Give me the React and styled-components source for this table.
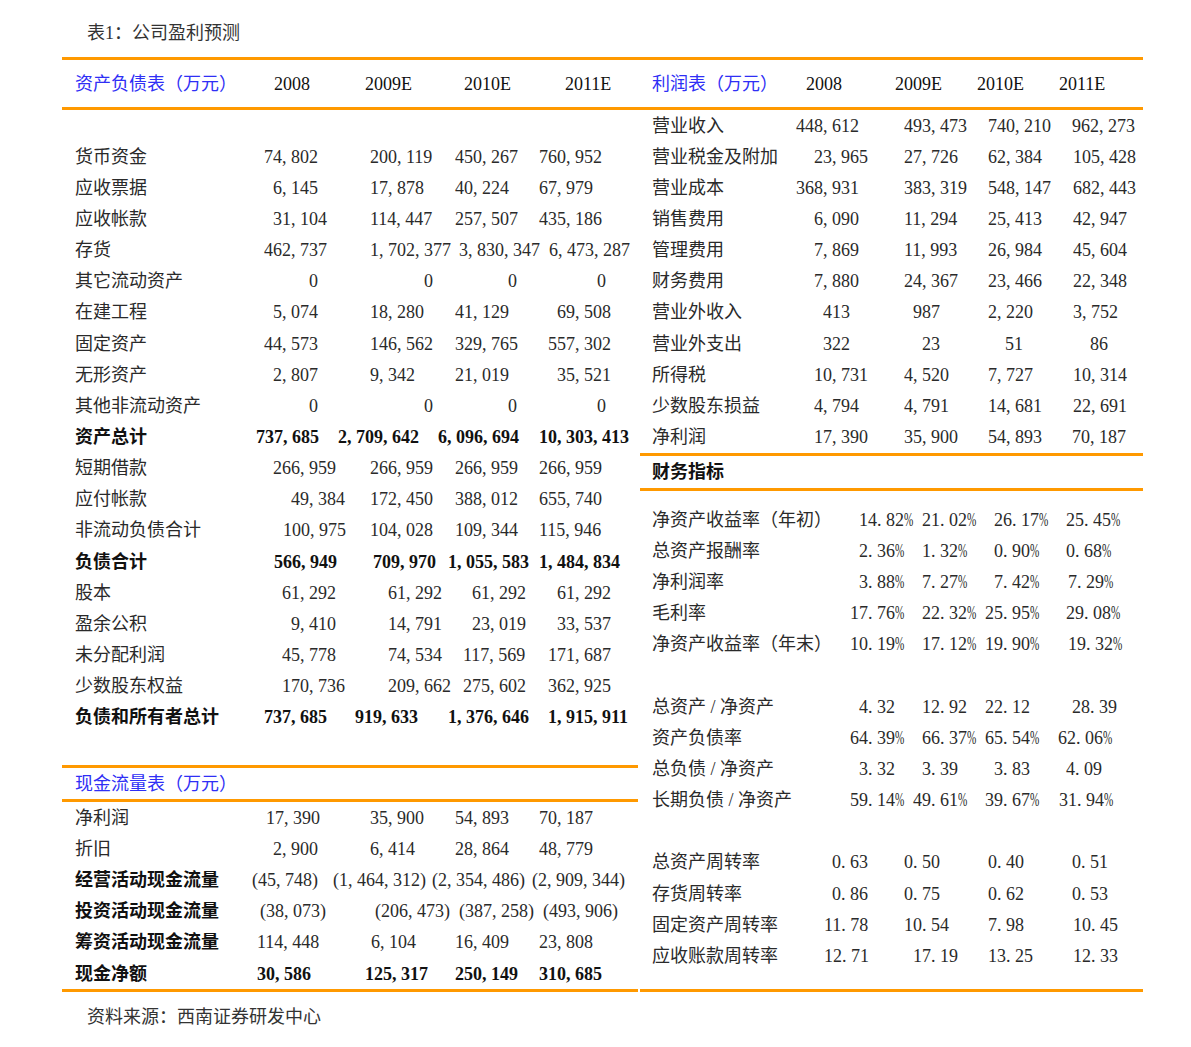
import React from 'react'
import styled, { createGlobalStyle } from 'styled-components'

const ORANGE = '#ff9900'
const BLUE = '#2f2ff5'

const GlobalStyle = createGlobalStyle`
  html, body {
    margin: 0;
    padding: 0;
    background: #ffffff;
  }
  body {
    font-family: "Liberation Serif", "Noto Sans CJK SC", serif;
    color: #2a2a2a;
  }
`

// column starts, measured from each panel's left edge
const LEFT_COLS = '178px 85px 95px 85px 133px'
const LEFT_STARTS = [62, 240, 325, 420, 505]
const RIGHT_COLS = '145px 105px 85px 75px 93px'
const RIGHT_STARTS = [640, 785, 890, 975, 1050]

const balance = [
  { label: '' },
  { label: '货币资金', vals: [[264, '74,802'], [370, '200,119'], [455, '450,267'], [539, '760,952']] },
  { label: '应收票据', vals: [[273, '6,145'], [370, '17,878'], [455, '40,224'], [539, '67,979']] },
  { label: '应收帐款', vals: [[273, '31,104'], [370, '114,447'], [455, '257,507'], [539, '435,186']] },
  { label: '存货', vals: [[264, '462,737'], [370, '1,702,377'], [459, '3,830,347'], [549, '6,473,287']] },
  { label: '其它流动资产', vals: [[309, '0'], [424, '0'], [508, '0'], [597, '0']] },
  { label: '在建工程', vals: [[273, '5,074'], [370, '18,280'], [455, '41,129'], [557, '69,508']] },
  { label: '固定资产', vals: [[264, '44,573'], [370, '146,562'], [455, '329,765'], [548, '557,302']] },
  { label: '无形资产', vals: [[273, '2,807'], [370, '9,342'], [455, '21,019'], [557, '35,521']] },
  { label: '其他非流动资产', vals: [[309, '0'], [424, '0'], [508, '0'], [597, '0']] },
  { label: '资产总计', bold: 'all', vals: [[256, '737,685'], [338, '2,709,642'], [438, '6,096,694'], [539, '10,303,413']] },
  { label: '短期借款', vals: [[273, '266,959'], [370, '266,959'], [455, '266,959'], [539, '266,959']] },
  { label: '应付帐款', vals: [[291, '49,384'], [370, '172,450'], [455, '388,012'], [539, '655,740']] },
  { label: '非流动负债合计', vals: [[283, '100,975'], [370, '104,028'], [455, '109,344'], [539, '115,946']] },
  { label: '负债合计', bold: 'all', vals: [[274, '566,949'], [373, '709,970'], [448, '1,055,583'], [539, '1,484,834']] },
  { label: '股本', vals: [[282, '61,292'], [388, '61,292'], [472, '61,292'], [557, '61,292']] },
  { label: '盈余公积', vals: [[291, '9,410'], [388, '14,791'], [472, '23,019'], [557, '33,537']] },
  { label: '未分配利润', vals: [[282, '45,778'], [388, '74,534'], [463, '117,569'], [548, '171,687']] },
  { label: '少数股东权益', vals: [[282, '170,736'], [388, '209,662'], [463, '275,602'], [548, '362,925']] },
  { label: '负债和所有者总计', bold: 'all', vals: [[264, '737,685'], [355, '919,633'], [448, '1,376,646'], [548, '1,915,911']] }
]

const cashflow = [
  { label: '净利润', vals: [[266, '17,390'], [370, '35,900'], [455, '54,893'], [539, '70,187']] },
  { label: '折旧', vals: [[273, '2,900'], [370, '6,414'], [455, '28,864'], [539, '48,779']] },
  { label: '经营活动现金流量', bold: 'label', vals: [[249, '(45,748)'], [330, '(1,464,312)'], [429, '(2,354,486)'], [529, '(2,909,344)']] },
  { label: '投资活动现金流量', bold: 'label', vals: [[257, '(38,073)'], [372, '(206,473)'], [456, '(387,258)'], [540, '(493,906)']] },
  { label: '筹资活动现金流量', bold: 'label', vals: [[257, '114,448'], [371, '6,104'], [455, '16,409'], [539, '23,808']] },
  { label: '现金净额', bold: 'all', vals: [[257, '30,586'], [365, '125,317'], [455, '250,149'], [539, '310,685']] }
]

const income = [
  { label: '营业收入', vals: [[796, '448,612'], [904, '493,473'], [988, '740,210'], [1072, '962,273']] },
  { label: '营业税金及附加', vals: [[814, '23,965'], [904, '27,726'], [988, '62,384'], [1073, '105,428']] },
  { label: '营业成本', vals: [[796, '368,931'], [904, '383,319'], [988, '548,147'], [1073, '682,443']] },
  { label: '销售费用', vals: [[814, '6,090'], [904, '11,294'], [988, '25,413'], [1073, '42,947']] },
  { label: '管理费用', vals: [[814, '7,869'], [904, '11,993'], [988, '26,984'], [1073, '45,604']] },
  { label: '财务费用', vals: [[814, '7,880'], [904, '24,367'], [988, '23,466'], [1073, '22,348']] },
  { label: '营业外收入', vals: [[823, '413'], [913, '987'], [988, '2,220'], [1073, '3,752']] },
  { label: '营业外支出', vals: [[823, '322'], [922, '23'], [1005, '51'], [1090, '86']] },
  { label: '所得税', vals: [[814, '10,731'], [904, '4,520'], [988, '7,727'], [1073, '10,314']] },
  { label: '少数股东损益', vals: [[814, '4,794'], [904, '4,791'], [988, '14,681'], [1073, '22,691']] },
  { label: '净利润', vals: [[814, '17,390'], [904, '35,900'], [988, '54,893'], [1072, '70,187']] }
]

const ratios = [
  { label: '净资产收益率（年初）', vals: [[859, '14.82%'], [922, '21.02%'], [994, '26.17%'], [1066, '25.45%']] },
  { label: '总资产报酬率', vals: [[859, '2.36%'], [922, '1.32%'], [994, '0.90%'], [1066, '0.68%']] },
  { label: '净利润率', vals: [[859, '3.88%'], [922, '7.27%'], [994, '7.42%'], [1068, '7.29%']] },
  { label: '毛利率', vals: [[850, '17.76%'], [922, '22.32%'], [985, '25.95%'], [1066, '29.08%']] },
  { label: '净资产收益率（年末）', vals: [[850, '10.19%'], [922, '17.12%'], [985, '19.90%'], [1068, '19.32%']] },
  { label: '' },
  { label: '总资产 / 净资产', vals: [[859, '4.32'], [922, '12.92'], [985, '22.12'], [1072, '28.39']] },
  { label: '资产负债率', vals: [[850, '64.39%'], [922, '66.37%'], [985, '65.54%'], [1058, '62.06%']] },
  { label: '总负债 / 净资产', vals: [[859, '3.32'], [922, '3.39'], [994, '3.83'], [1066, '4.09']] },
  { label: '长期负债 / 净资产', vals: [[850, '59.14%'], [913, '49.61%'], [985, '39.67%'], [1059, '31.94%']] },
  { label: '' },
  { label: '总资产周转率', vals: [[832, '0.63'], [904, '0.50'], [988, '0.40'], [1072, '0.51']] },
  { label: '存货周转率', vals: [[832, '0.86'], [904, '0.75'], [988, '0.62'], [1072, '0.53']] },
  { label: '固定资产周转率', vals: [[824, '11.78'], [904, '10.54'], [988, '7.98'], [1073, '10.45']] },
  { label: '应收账款周转率', vals: [[824, '12.71'], [913, '17.19'], [988, '13.25'], [1073, '12.33']] }
]

const Page = styled.div`
  width: 1191px;
  padding-left: 62px;
  box-sizing: border-box;
`

const Caption = styled.div`
  padding: 21px 0 12px 25px;
  font-size: 18px;
  line-height: 24px;
  color: #333;
`

const Source = styled(Caption)`
  padding: 12.6px 0 0 25px;
`

const Columns = styled.div`
  display: flex;
  gap: 2px;
  width: 1081px;
`

const Panel = styled.div`
  width: ${(p) => p.$w}px;
  display: flex;
  flex-direction: column;
`

const Grid = styled.div`
  display: grid;
  grid-template-columns: ${(p) => p.$cols};
  align-items: center;
  font-size: 18px;
  line-height: 24px;
  white-space: nowrap;
`

const HeadRow = styled(Grid)`
  height: 47px;
  border-top: 3px solid ${ORANGE};
  border-bottom: 3px solid ${ORANGE};
  margin-right: ${(p) => (p.$bridge ? '-2px' : '0')};
  color: #111;
`

const SubHead = styled(Grid)`
  height: ${(p) => p.$h}px;
  border-top: 3px solid ${ORANGE};
  border-bottom: 3px solid ${ORANGE};
`

const Row = styled(Grid)`
  height: 31.15px;
`

const Cell = styled.div`
  padding-left: ${(p) => p.$x}px;
  font-weight: ${(p) => (p.$bold ? 700 : 400)};
  color: ${(p) => (p.$bold ? '#111' : '#2a2a2a')};
`

const Title = styled.div`
  padding-left: ${(p) => p.$x}px;
  color: ${(p) => (p.$blue ? BLUE : '#111')};
  font-weight: ${(p) => (p.$bold ? 700 : 400)};
`

const Spacer = styled.div`
  height: ${(p) => p.$h}px;
`

const RatioBody = styled.div`
  padding: 13.8px 0 17.7px;
  border-bottom: 3px solid ${ORANGE};
`

const CashBody = styled.div`
  border-bottom: 3px solid ${ORANGE};
`

const Half = styled.span`
  display: inline-block;
  width: 0.5em;
  text-align: ${(p) => p.$align};
`

const Pct = styled.span`
  display: inline-block;
  width: 0.5em;
  transform: scaleX(0.62);
  transform-origin: left center;
`

// SimSun-like half-width punctuation so figures keep their fixed pitch
const Num = ({ text }) => (
  <>
    {[...text].map((ch, i) => {
      if (ch === ',' || ch === '.') return <Half key={i} $align="left">{ch}</Half>
      if (ch === '(') return <Half key={i} $align="right">{ch}</Half>
      if (ch === ')') return <Half key={i} $align="left">{ch}</Half>
      if (ch === '%') return <Pct key={i}>{ch}</Pct>
      return ch
    })}
  </>
)

const DataRows = ({ rows, cols, starts, labelPad }) =>
  rows.map((r, i) => (
    <Row key={i} $cols={cols}>
      <Cell $x={labelPad} $bold={!!r.bold}>{r.label}</Cell>
      {(r.vals || []).map(([x, v], j) => (
        <Cell key={j} $x={x - starts[j + 1]} $bold={r.bold === 'all'}>
          <Num text={v} />
        </Cell>
      ))}
    </Row>
  ))

const Years = ({ xs, starts }) =>
  ['2008', '2009E', '2010E', '2011E'].map((y, i) => (
    <Title key={y} $x={xs[i] - starts[i + 1]}>{y}</Title>
  ))

const App = () => {
  return (
    <>
      <GlobalStyle />
      <Page>
        <Caption>表1：公司盈利预测</Caption>
        <Columns>
          <Panel $w={576}>
            <HeadRow $cols={LEFT_COLS} $bridge>
              <Title $x={13} $blue>资产负债表（万元）</Title>
              <Years xs={[274, 365, 464, 565]} starts={LEFT_STARTS} />
            </HeadRow>
            <DataRows rows={balance} cols={LEFT_COLS} starts={LEFT_STARTS} labelPad={13} />
            <Spacer $h={32.5} />
            <SubHead $cols={LEFT_COLS} $h={31}>
              <Title $x={13} $blue>现金流量表（万元）</Title>
            </SubHead>
            <CashBody>
              <DataRows rows={cashflow} cols={LEFT_COLS} starts={LEFT_STARTS} labelPad={13} />
            </CashBody>
          </Panel>
          <Panel $w={503}>
            <HeadRow $cols={RIGHT_COLS}>
              <Title $x={12} $blue>利润表（万元）</Title>
              <Years xs={[806, 895, 977, 1059]} starts={RIGHT_STARTS} />
            </HeadRow>
            <DataRows rows={income} cols={RIGHT_COLS} starts={RIGHT_STARTS} labelPad={12} />
            <SubHead $cols={RIGHT_COLS} $h={32}>
              <Title $x={12} $bold>财务指标</Title>
            </SubHead>
            <RatioBody>
              <DataRows rows={ratios} cols={RIGHT_COLS} starts={RIGHT_STARTS} labelPad={12} />
            </RatioBody>
          </Panel>
        </Columns>
        <Source>资料来源：西南证券研发中心</Source>
      </Page>
    </>
  )
}

export default App
